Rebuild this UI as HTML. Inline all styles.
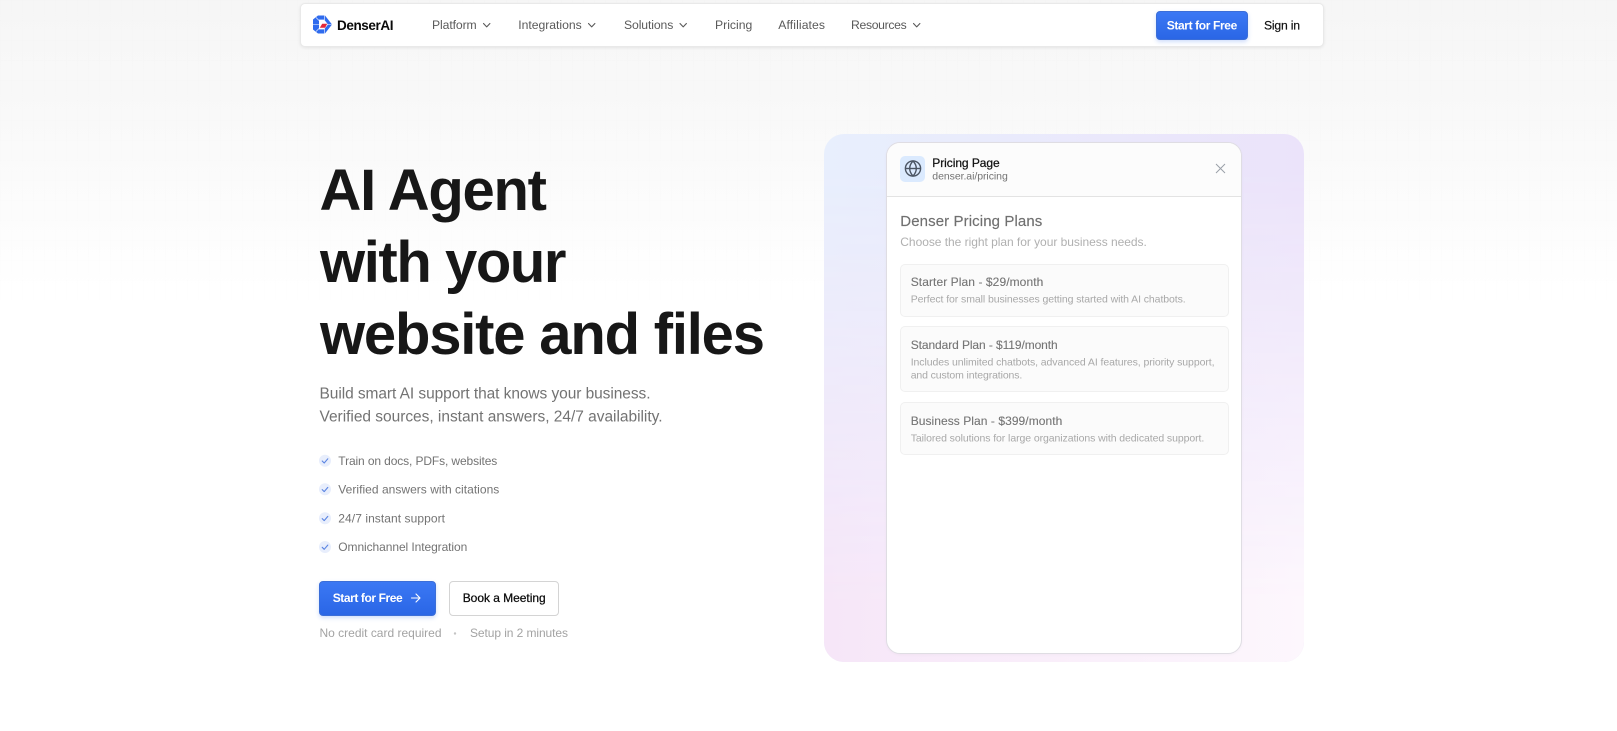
<!DOCTYPE html>
<html lang="en">
<head>
<meta charset="utf-8">
<title>DenserAI</title>
<style>
html,body{margin:0;padding:0;width:1617px;height:731px;overflow:hidden;background:#fff}
body{position:relative;font-family:"Liberation Sans",sans-serif}
.abs{position:absolute;box-sizing:border-box}
#bg{left:0;top:0;width:1617px;height:731px;background:linear-gradient(#f6f6f6 0,#f9f9f9 120px,#fdfdfd 240px,#fff 290px)}
#grid{left:0;top:0;width:1617px;height:300px;background-image:linear-gradient(to right,rgba(0,0,0,.005) 1px,transparent 1px),linear-gradient(to bottom,rgba(0,0,0,.005) 1px,transparent 1px);background-size:11px 20px}
#nav{left:300px;top:3px;width:1024px;height:44px;background:#fff;border:1px solid #e9e9e9;border-radius:5px;box-shadow:0 1px 3px rgba(0,0,0,.08)}
.btn{background:linear-gradient(#3b78f4,#2a66e6);border:1px solid #3b6ed8;border-radius:4px;box-shadow:0 2px 4px rgba(37,99,235,.22)}
#panel{left:824px;top:134px;width:480px;height:528px;border-radius:20px;overflow:hidden;background:linear-gradient(to right,#e8effd,#ebe3fa)}
#panel:before{content:"";position:absolute;inset:0;background:linear-gradient(to right,#f6e6f8,#fdf7fd);-webkit-mask-image:linear-gradient(to bottom,transparent 5%,#000 90%);mask-image:linear-gradient(to bottom,transparent 5%,#000 90%)}
#card{left:886px;top:141.5px;width:356px;height:512.5px;background:#fff;border:1px solid #dfdde3;border-radius:14px;box-shadow:0 1px 3px rgba(0,0,0,.03);overflow:hidden}
#cardhead{left:0;top:0;width:354px;height:54px;background:#fcfcfc;border-bottom:1px solid #e3e3e3}
#tile{left:900px;top:156px;width:25px;height:26px;background:#dbeafe;border-radius:5px}
.plan{left:900px;width:329px;background:#fbfbfb;border:1px solid #f0f0f0;border-radius:5px}
#outline{left:449px;top:581px;width:110px;height:35px;background:#fff;border:1px solid #d4d4d4;border-radius:4px}
#txt{position:absolute;left:0;top:0}
</style>
</head>
<body>
<div class="abs" id="bg"></div>
<div class="abs" id="grid"></div>
<div class="abs" id="nav"></div>
<div class="abs btn" style="left:1156px;top:11px;width:92px;height:29px"></div>
<div class="abs" id="panel"></div>
<div class="abs" id="card"><div class="abs" id="cardhead"></div></div>
<div class="abs" id="tile"></div>
<div class="abs plan" style="top:264px;height:53px"></div>
<div class="abs plan" style="top:326px;height:66px"></div>
<div class="abs plan" style="top:402px;height:53px"></div>
<div class="abs btn" style="left:319px;top:581px;width:117px;height:35px"></div>
<div class="abs" id="outline"></div>

<svg id="txt" width="1617" height="731" viewBox="0 0 1617 731" xmlns="http://www.w3.org/2000/svg" font-family="'Liberation Sans',sans-serif">
  <!-- logo -->
  <g transform="translate(313,15)">
    <path d="M0 4.5L5 .5H12L19 9.5L12 18.5H5L0 14.5Z" fill="#2f6bee"/>
    <path d="M6 4.6H11.2L15 9.5L11.2 14.4H6Z" fill="#fff"/>
    <g stroke="#fff" stroke-width=".6" fill="none">
      <path d="M0 9.5H6M3 2.5L6 5.5M3 16.5L6 13.5M11.5 0V5M11.5 14V19M15 9.5H19"/>
    </g>
    <polygon points="6.8,12.8 9.2,8.8 14.2,8.8 12.2,12.8" fill="#e5283a"/>
  </g>
  <text x="337" y="30" font-size="13.5" font-weight="700" fill="#0a0a0a" textLength="56.5">DenserAI</text>

  <!-- nav -->
  <g font-size="12.2" fill="#5a5a5a">
    <text x="432" y="29" textLength="44.7">Platform</text>
    <text x="518.3" y="29" textLength="63.4">Integrations</text>
    <text x="624" y="29" textLength="49.3">Solutions</text>
    <text x="715" y="29" textLength="37.3">Pricing</text>
    <text x="778.3" y="29" textLength="46.7">Affiliates</text>
    <text x="851" y="29" textLength="55.7">Resources</text>
  </g>
  <g fill="none" stroke="#5a5a5a" stroke-width="1.1" stroke-linecap="round" stroke-linejoin="round">
    <path d="M483.5 23.5l3.2 3.4 3.2-3.4"/>
    <path d="M588.5 23.5l3.2 3.4 3.2-3.4"/>
    <path d="M680 23.5l3.2 3.4 3.2-3.4"/>
    <path d="M913.5 23.5l3.2 3.4 3.2-3.4"/>
  </g>
  <text x="1166.7" y="29.3" font-size="12" font-weight="700" fill="#fff" textLength="70.6">Start for Free</text>
  <text x="1264" y="29.3" font-size="12.2" fill="#111" stroke="#111" stroke-width=".2" textLength="36">Sign in</text>

  <!-- heading -->
  <g font-size="58" font-weight="700" fill="#171717">
    <text x="319.5" y="210" textLength="227.5">AI Agent</text>
    <text x="320" y="282" textLength="246.5">with your</text>
    <text x="320" y="354" textLength="445">website and files</text>
  </g>
  <g font-size="15.5" fill="#737373">
    <text x="319.5" y="398.3" textLength="331">Build smart AI support that knows your business.</text>
    <text x="319.5" y="421.7" textLength="343">Verified sources, instant answers, 24/7 availability.</text>
  </g>

  <!-- checklist -->
  <g fill="#e8eefc">
    <circle cx="325" cy="460.7" r="6"/>
    <circle cx="325" cy="489.3" r="6"/>
    <circle cx="325" cy="518.3" r="6"/>
    <circle cx="325" cy="547" r="6"/>
  </g>
  <g fill="none" stroke="#5a84e2" stroke-width="1.1" stroke-linecap="round" stroke-linejoin="round">
    <path d="M322.2 461l2 2 3.6-4.2"/>
    <path d="M322.2 489.6l2 2 3.6-4.2"/>
    <path d="M322.2 518.6l2 2 3.6-4.2"/>
    <path d="M322.2 547.3l2 2 3.6-4.2"/>
  </g>
  <g font-size="12" fill="#737373">
    <text x="338.3" y="465" textLength="159">Train on docs, PDFs, websites</text>
    <text x="338.3" y="493.3" textLength="161">Verified answers with citations</text>
    <text x="338.3" y="522.3" textLength="106.7">24/7 instant support</text>
    <text x="338.3" y="551" textLength="129">Omnichannel Integration</text>
  </g>

  <!-- cta -->
  <text x="332.7" y="602" font-size="12" font-weight="700" fill="#fff" textLength="70">Start for Free</text>
  <path d="M411.5 598h8.3M416 594l4 4-4 4" fill="none" stroke="#fff" stroke-width="1.1" stroke-linecap="round" stroke-linejoin="round"/>
  <text x="462.7" y="602" font-size="12" fill="#0a0a0a" stroke="#0a0a0a" stroke-width=".25" textLength="83">Book a Meeting</text>
  <g font-size="12" fill="#a3a3a3">
    <text x="319.5" y="637" textLength="122">No credit card required</text>
    <circle cx="455" cy="633.5" r="1.2" fill="#c4c4c4"/>
    <text x="470" y="637" textLength="98">Setup in 2 minutes</text>
  </g>

  <!-- card head -->
  <g fill="none" stroke="#4b5563" stroke-width="1.4">
    <circle cx="913" cy="168.5" r="7.6"/>
    <path d="M905.6 168.5h14.8"/>
    <path d="M913 161c-4.4 4.6-4.4 10.4 0 15c4.4-4.6 4.4-10.4 0-15z"/>
  </g>
  <text x="932.3" y="167" font-size="12" fill="#111" stroke="#111" stroke-width=".25" textLength="67.4">Pricing Page</text>
  <text x="932.3" y="179.7" font-size="10.5" fill="#737373" textLength="75.5">denser.ai/pricing</text>
  <path d="M1216 164l9 9M1225 164l-9 9" stroke="#9aa0a8" stroke-width="1" fill="none"/>

  <text x="900.3" y="226" font-size="15" fill="#707070" stroke="#707070" stroke-width=".15" textLength="142">Denser Pricing Plans</text>
  <text x="900.3" y="246" font-size="12" fill="#b0b0b0" textLength="246.5">Choose the right plan for your business needs.</text>

  <g font-size="12" fill="#757575" stroke="#757575" stroke-width=".12">
    <text x="910.7" y="286" textLength="132.6">Starter Plan - $29/month</text>
    <text x="910.7" y="349" textLength="147">Standard Plan - $119/month</text>
    <text x="910.7" y="425" textLength="151.6">Business Plan - $399/month</text>
  </g>
  <g font-size="10.5" fill="#a8a8a8">
    <text x="910.7" y="302.3" textLength="275">Perfect for small businesses getting started with AI chatbots.</text>
    <text x="910.7" y="365.3" textLength="303.8">Includes unlimited chatbots, advanced AI features, priority support,</text>
    <text x="910.7" y="378.3" textLength="111.6">and custom integrations.</text>
    <text x="910.7" y="441.3" textLength="293.6">Tailored solutions for large organizations with dedicated support.</text>
  </g>
</svg>
</body>
</html>
